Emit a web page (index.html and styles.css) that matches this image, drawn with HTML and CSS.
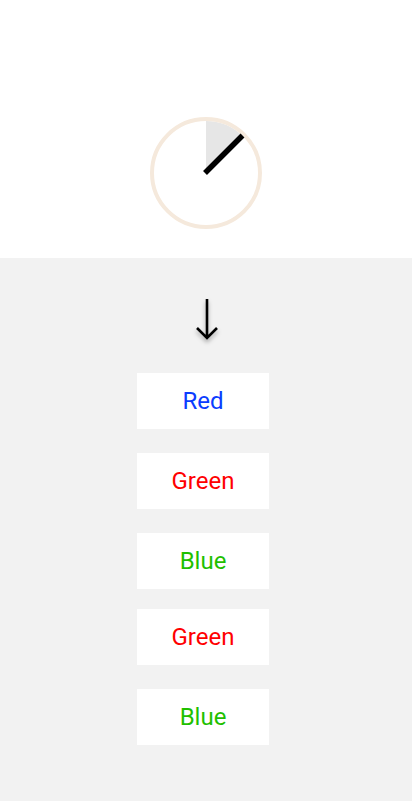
FILE: index.html
```html
<!DOCTYPE html>
<html>
<head>
<meta charset="utf-8">
<link rel="stylesheet" href="styles.css">
</head>
<body>
<div class="top">
  <svg class="dial" width="112" height="112" viewBox="0 0 112 112">
    <path d="M56 56 L56 4 A52 52 0 0 1 92.77 19.23 Z" fill="#e6e6e6"/>
    <circle cx="56" cy="56" r="54" fill="none" stroke="#f5e9dc" stroke-width="4"/>
    <line x1="55" y1="56" x2="92.5" y2="18.5" stroke="#000" stroke-width="5.5"/>
  </svg>
</div>
<div class="bottom">
  <svg class="arrow" width="30" height="50" viewBox="0 0 30 50">
    <path d="M15 3 V42 M5 32 L15 42 L25 32" fill="none" stroke="#000" stroke-width="2.6"/>
  </svg>
  <div class="list">
    <div class="item c-blue">Red</div>
    <div class="item c-red">Green</div>
    <div class="item c-green">Blue</div>
    <div class="item c-red tight">Green</div>
    <div class="item c-green">Blue</div>
  </div>
</div>
</body>
</html>
```
FILE: styles.css
```css
html, body {
  margin: 0;
  padding: 0;
}
body {
  width: 412px;
  height: 801px;
  background: #f2f2f2;
  font-family: Roboto, "Liberation Sans", sans-serif;
  overflow: hidden;
}
.top {
  height: 258px;
  background: #ffffff;
  display: flex;
  justify-content: center;
  padding-top: 117px;
  box-sizing: border-box;
}
.dial {
  display: block;
}
.bottom {
  display: flex;
  flex-direction: column;
  align-items: center;
}
.arrow {
  display: block;
  margin-top: 38px;
  margin-left: 2px;
  filter: drop-shadow(0 3px 2px rgba(0,0,0,0.3));
}
.list {
  display: flex;
  flex-direction: column;
  margin-top: 27px;
}
.item {
  width: 132px;
  height: 56px;
  background: #ffffff;
  display: flex;
  align-items: center;
  justify-content: center;
  font-size: 24px;
  margin-bottom: 24px;
  margin-left: -6px;
}
.item.tight {
  margin-top: -4px;
}
.c-blue { color: #0b3cff; }
.c-red { color: #ff0000; }
.c-green { color: #1fbf00; }
```
